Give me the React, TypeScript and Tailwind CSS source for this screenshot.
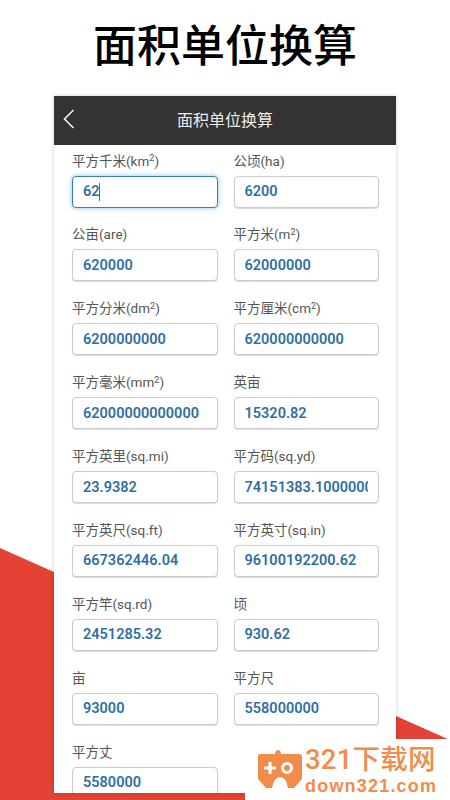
const rows: { label: string; sup?: string; tail?: string; value: string }[] = [
  { label: "平方千米(km", sup: "2", tail: ")", value: "62" },
  { label: "公顷(ha)", value: "6200" },
  { label: "公亩(are)", value: "620000" },
  { label: "平方米(m", sup: "2", tail: ")", value: "62000000" },
  { label: "平方分米(dm", sup: "2", tail: ")", value: "6200000000" },
  { label: "平方厘米(cm", sup: "2", tail: ")", value: "620000000000" },
  { label: "平方毫米(mm", sup: "2", tail: ")", value: "62000000000000" },
  { label: "英亩", value: "15320.82" },
  { label: "平方英里(sq.mi)", value: "23.9382" },
  { label: "平方码(sq.yd)", value: "74151383.10000000" },
  { label: "平方英尺(sq.ft)", value: "667362446.04" },
  { label: "平方英寸(sq.in)", value: "96100192200.62" },
  { label: "平方竿(sq.rd)", value: "2451285.32" },
  { label: "顷", value: "930.62" },
  { label: "亩", value: "93000" },
  { label: "平方尺", value: "558000000" },
  { label: "平方丈", value: "5580000" },
];

export default function App() {
  return (
    <div className="relative h-[800px] w-[450px] overflow-hidden bg-white font-['Roboto','Noto_Sans_CJK_SC',sans-serif]">
      <svg className="absolute inset-0" width="450" height="800" viewBox="0 0 450 800">
        <polygon points="0,548 54,572 396,716 450,740 450,800 0,800" fill="#e34234" />
      </svg>
      <div className="relative flex h-full flex-col items-center">
        <h1 className="mt-[18px] h-[78px] text-[44px] font-medium leading-[58px] text-black">面积单位换算</h1>
        <div className="h-[697px] w-[342px] overflow-hidden bg-white shadow-[0_0_4px_rgba(0,0,0,0.2)]">
          <div className="relative flex h-[49px] items-center justify-center bg-[#333333] text-[16px] text-[#eeeeee]">
            <svg className="absolute left-[9px] top-[13px]" width="12" height="20" viewBox="0 0 12 20" fill="none" stroke="#f2f2f2" strokeWidth="1.6">
              <path d="M10.5 1 L1.5 10 L10.5 19" />
            </svg>
            面积单位换算
          </div>
          <div className="grid grid-cols-[146px_145.5px] gap-x-[15.5px] pl-[18px] pt-[6.5px]">
            {rows.map((r) => (
              <div key={r.label} className="h-[73.875px]">
                <div className="h-[19px] whitespace-nowrap text-[13.5px] leading-[19px] text-[#555555]">
                  {r.label}
                  {r.sup && <sup className="text-[9px] leading-none">{r.sup}</sup>}
                  {r.tail}
                </div>
                <div className="relative mt-[5px]">
                  <input
                    readOnly
                    value={r.value}
                    className={
                      r.value === "62"
                        ? "h-[32px] w-full rounded-[4px] border border-[#3f7ea8] bg-white px-[10px] text-[14.5px] font-semibold text-[#2f6fa3] shadow-[0_0_5px_rgba(102,175,233,0.8)] outline-none"
                        : "h-[32px] w-full rounded-[4px] border border-[#cccccc] bg-white px-[10px] text-[14.5px] font-semibold text-[#2f6fa3] shadow-[0_1px_1px_rgba(0,0,0,0.15)] outline-none"
                    }
                  />
                  {r.value === "62" && <span className="absolute left-[27px] top-[7px] h-[18px] w-px bg-[#3f6f90]" />}
                </div>
              </div>
            ))}
          </div>
        </div>
      </div>
      <div className="absolute right-0 top-[739px] flex h-[61px] w-[205px] items-center gap-[3px] bg-white pl-[13px]">
        <svg width="44" height="40" viewBox="0 0 44 40">
          <path d="M2 4 H17 Q17.5 0 20 0 Q22.5 0 23 4 H41 Q44 4 44 7 V29 L36 38 H30 Q28 27 22 27 Q16 27 14 38 H8 L0 29 V6 Q0 4 2 4 Z" fill="#f28c4b" />
          <path d="M6 18 H18 M12 12 V24" stroke="#fff" strokeWidth="3.2" />
          <circle cx="29" cy="18" r="4.5" fill="none" stroke="#fff" strokeWidth="3" />
        </svg>
        <div className="flex flex-col gap-[2px] text-[#f28c4b]">
          <span className="text-[27.5px] font-medium leading-[30px] tracking-[0.2px]">321下载网</span>
          <span className="font-['Liberation_Sans',sans-serif] text-[18px] font-bold leading-[18px] tracking-[1.2px]">down321.com</span>
        </div>
      </div>
    </div>
  );
}
